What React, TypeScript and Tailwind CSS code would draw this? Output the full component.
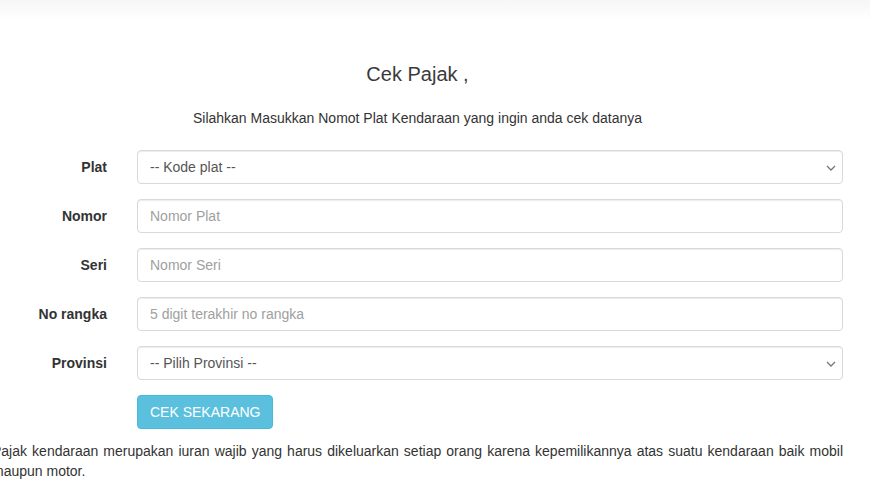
import React from "react";

const Chevron = () => (
  <svg width="10" height="6" viewBox="0 0 10 6" className="absolute right-[6px] top-[14px]" fill="none">
    <path d="M1 1l4 4 4-4" stroke="#777" strokeWidth="1.3" />
  </svg>
);

const Row = ({ label, children }: { label: string; children: React.ReactNode }) => (
  <div className="flex items-center mb-[15px]">
    <label className="w-[130px] pr-[15px] text-right font-bold text-[14px] text-[#333]">{label}</label>
    <div className="flex-1 pl-[15px]">{children}</div>
  </div>
);

const inputCls =
  "w-full h-[34px] px-[12px] border border-[#d9d9d9] rounded-[4px] text-[14px] text-[#555] placeholder:text-[#a0a0a0] shadow-[inset_0_1px_1px_rgba(0,0,0,0.075)] outline-none bg-white";

const Select = ({ text }: { text: string }) => (
  <div className={"relative flex items-center " + inputCls}>
    <span className="text-[#555]">{text}</span>
    <Chevron />
  </div>
);

export default function App() {
  return (
    <div className="w-[870px] h-[490px] overflow-hidden bg-white" style={{ fontFamily: '"Liberation Sans", Arial, sans-serif' }}>
      <div className="h-[20px] bg-gradient-to-b from-[#f6f6f6] to-white" />
      <div className="ml-[-8px] w-[851px]">
        <h1 className="mt-[43px] text-center text-[20px] leading-[22px] text-[#3a3a3a]">Cek Pajak ,</h1>
        <p className="mt-[23px] text-center text-[14px] leading-[20px] text-[#333]">
          Silahkan Masukkan Nomot Plat Kendaraan yang ingin anda cek datanya
        </p>
        <div className="mt-[22px]">
          <Row label="Plat">
            <Select text="-- Kode plat --" />
          </Row>
          <Row label="Nomor">
            <input className={inputCls} placeholder="Nomor Plat" />
          </Row>
          <Row label="Seri">
            <input className={inputCls} placeholder="Nomor Seri" />
          </Row>
          <Row label="No rangka">
            <input className={inputCls} placeholder="5 digit terakhir no rangka" />
          </Row>
          <Row label="Provinsi">
            <Select text="-- Pilih Provinsi --" />
          </Row>
          <div className="flex">
            <div className="w-[130px]" />
            <div className="pl-[15px]">
              <button className="h-[34px] px-[12px] rounded-[4px] bg-[#5bc0de] border border-[#46b8da] text-white text-[14px]">
                CEK SEKARANG
              </button>
            </div>
          </div>
        </div>
        <p className="mt-[12px] text-[14px] leading-[20px] text-[#333] text-justify">
          Pajak kendaraan merupakan iuran wajib yang harus dikeluarkan setiap orang karena kepemilikannya atas suatu kendaraan baik mobil maupun motor.
        </p>
      </div>
    </div>
  );
}
